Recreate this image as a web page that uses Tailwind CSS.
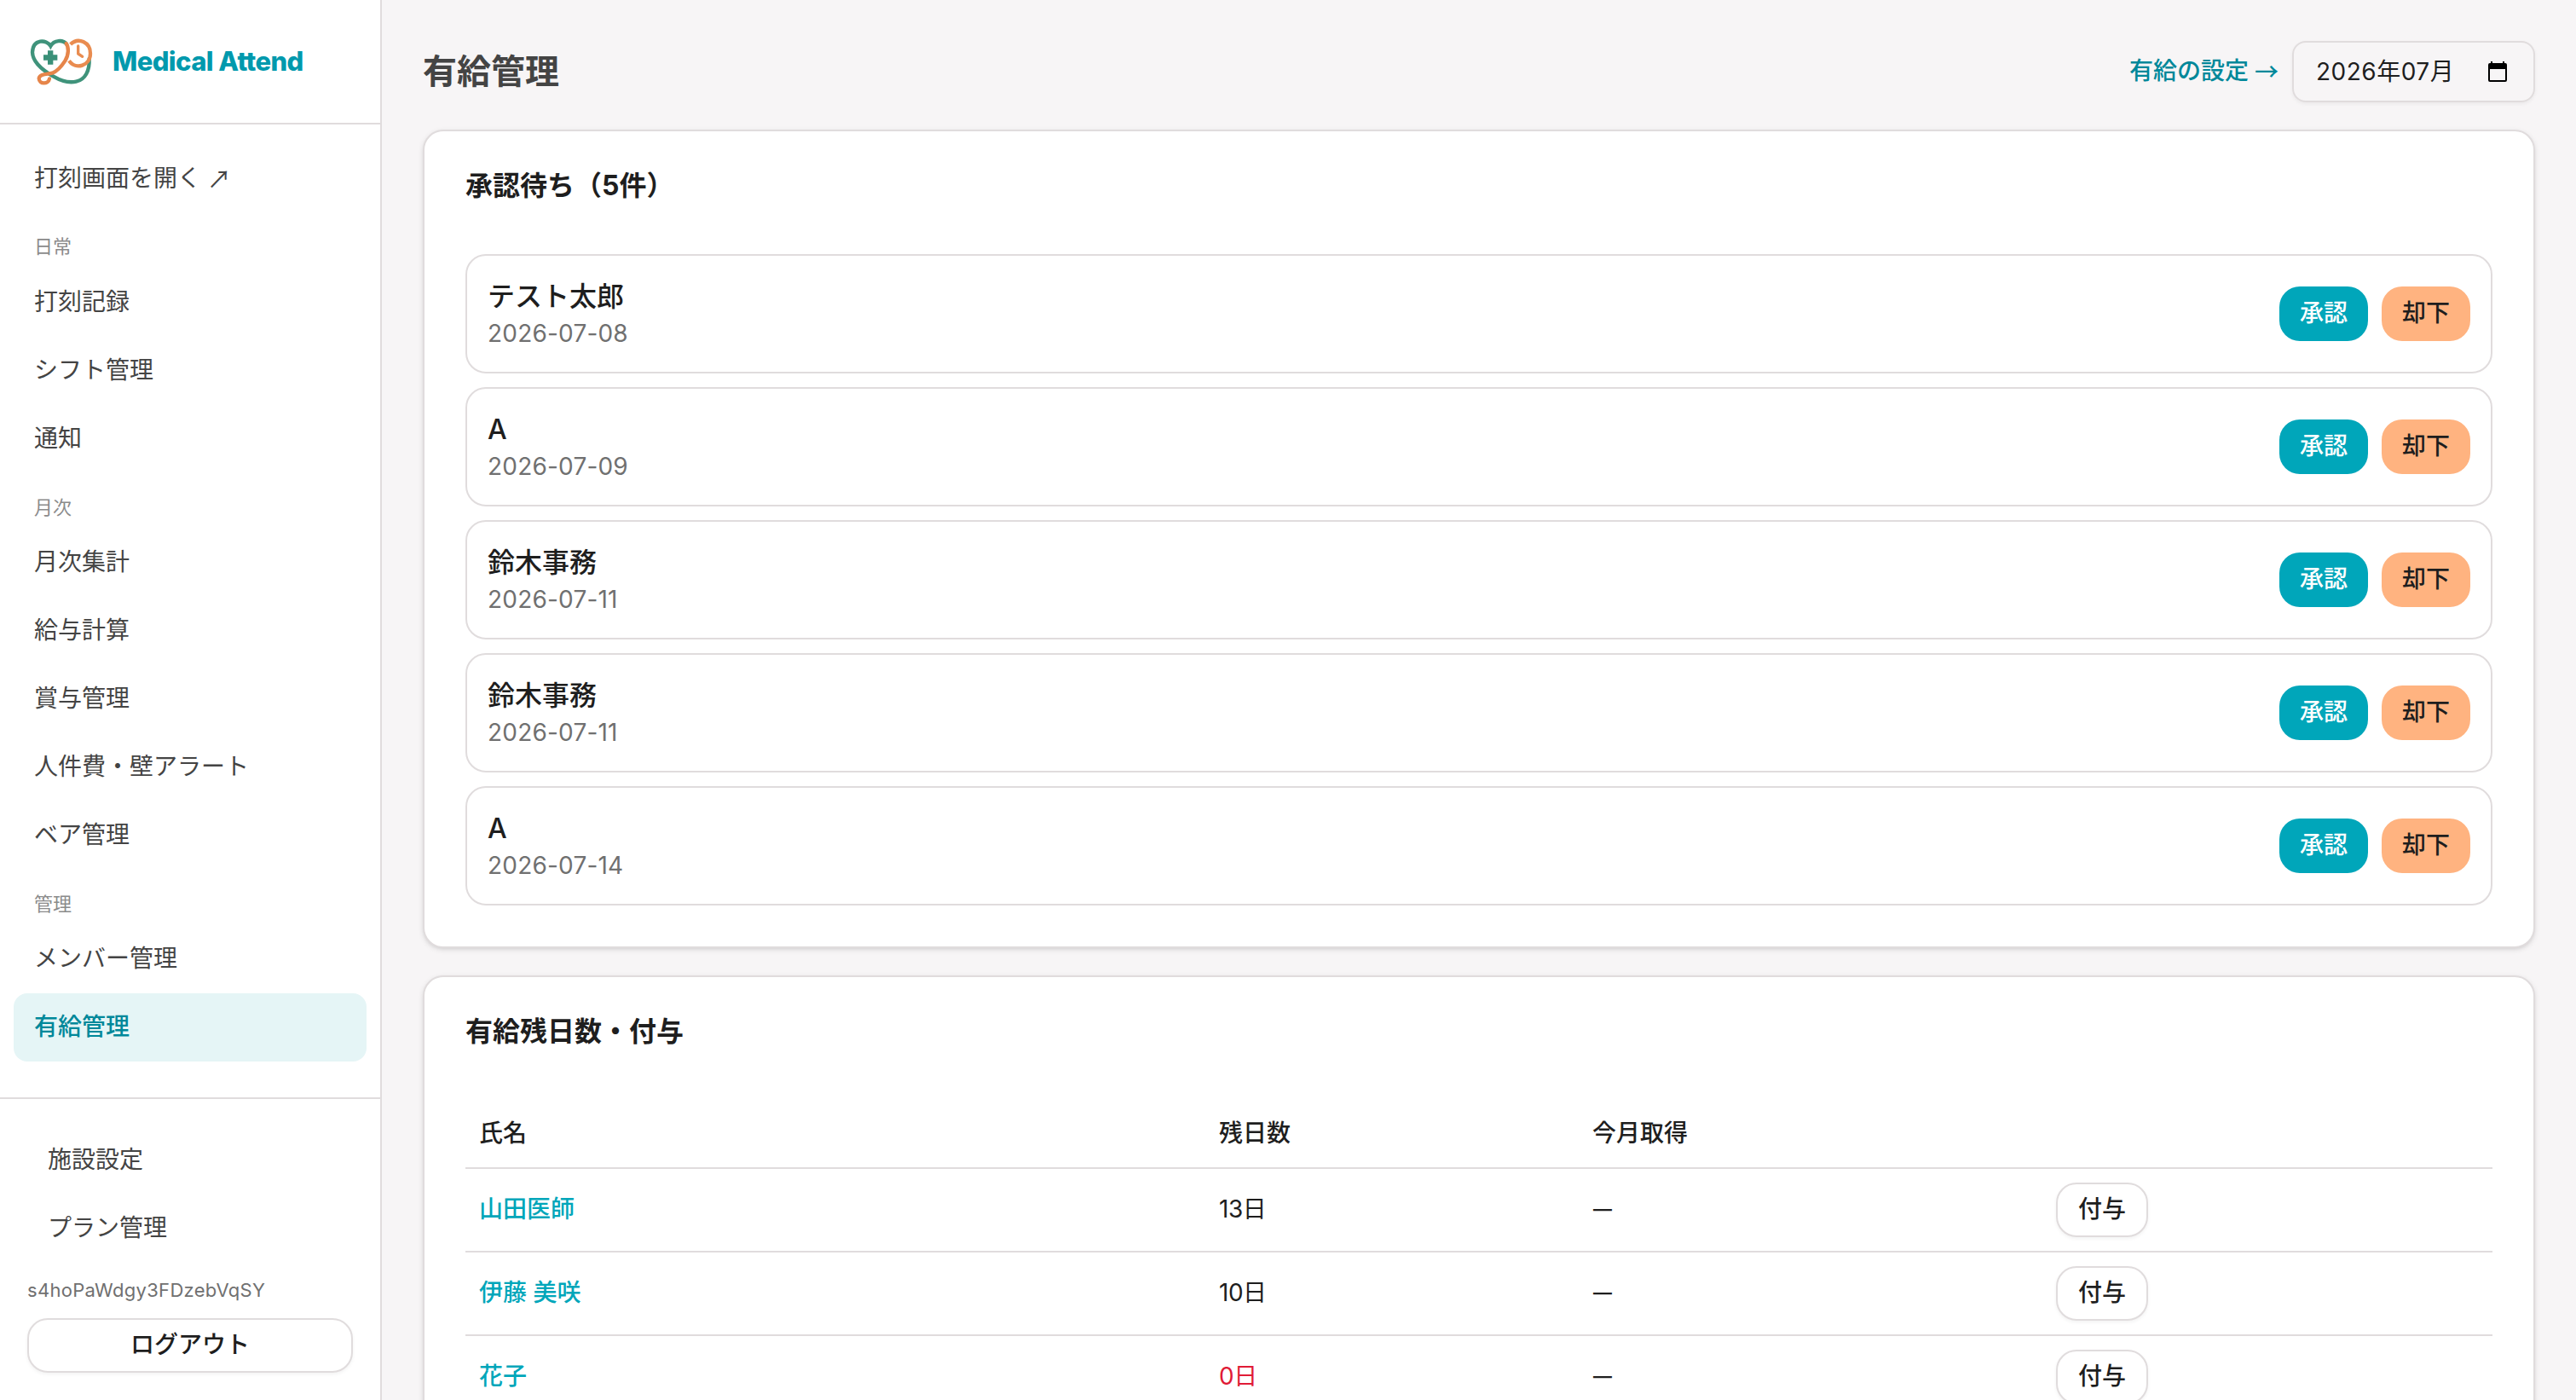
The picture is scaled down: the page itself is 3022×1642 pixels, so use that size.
<!DOCTYPE html>
<html lang="ja">
  <head>
    <meta charset="UTF-8" />
    <meta name="viewport" content="width=device-width, initial-scale=1.0" />
    <script src="https://cdn.jsdelivr.net/npm/@tailwindcss/browser@4"></script>
    <title>有給管理 | Medical Attend</title>
  </head>
  <body class="flex h-screen overflow-hidden bg-[#f7f5f6] font-['Inter','Noto_Sans_CJK_JP',sans-serif] text-[28px] leading-10 text-[#1e1e1e]">
    <aside class="flex h-screen w-[448px] shrink-0 flex-col border-r-2 border-[#e0dcdd] bg-white">
      <div class="flex h-[146px] shrink-0 items-center border-b-2 border-[#e0dcdd] pl-[35px]">
        <svg class="h-[57px] w-[74px]" viewBox="105 130 222 171" fill="none" stroke-width="13" stroke-linecap="round">
          <path stroke="#3f937b" d="M234 153C222 137 190 138 178 160C164 136 116 134 114 182C115 215 150 245 188 267C215 283 245 290 268 285C300 278 316 247 314 205" />
          <path stroke="#e6854a" d="M233 151C242 163 243 190 229 212C216 232 200 249 184 255C168 260 140 256 137 274C138 295 170 296 174 275" />
          <path stroke="#e98c50" stroke-linecap="butt" d="M248 154C276 127 318 147 318 186C318 229 267 246 243 212" />
          <path stroke="#e98c50" stroke-width="10" stroke-linejoin="round" d="M275 160V187L290 197" />
          <path stroke="#3a9078" stroke-width="19" stroke-linecap="butt" d="M153 200.500H202M177.500 176V225" />
        </svg>
        <span class="ml-[23px] text-[31px] font-extrabold tracking-[-0.6px] text-[#0099ad]">Medical Attend</span>
      </div>
      <nav class="flex flex-1 flex-col px-4 pt-[22px] text-[#444]">
        <a class="flex h-20 items-center px-6 pt-px">打刻画面を開く<span class="ml-[7px] font-['Noto_Sans_CJK_JP']">↗</span></a>
        <p class="h-[65.600px] px-6 pt-6 text-[22px] leading-[34px] text-[#8b8b8b]">日常</p>
        <a class="flex h-20 items-center px-6">打刻記録</a>
        <a class="flex h-20 items-center px-6">シフト管理</a>
        <a class="flex h-20 items-center px-6">通知</a>
        <p class="h-[65.600px] px-6 pt-6 text-[22px] leading-[34px] text-[#8b8b8b]">月次</p>
        <a class="flex h-20 items-center px-6">月次集計</a>
        <a class="flex h-20 items-center px-6">給与計算</a>
        <a class="flex h-20 items-center px-6">賞与管理</a>
        <a class="flex h-20 items-center px-6">人件費・壁アラート</a>
        <a class="flex h-20 items-center px-6">ベア管理</a>
        <p class="h-[65.600px] px-6 pt-6 text-[22px] leading-[34px] text-[#8b8b8b]">管理</p>
        <a class="flex h-20 items-center px-6 pb-px">メンバー管理</a>
        <a class="flex h-20 items-center rounded-2xl bg-[#e5f5f6] px-6 pb-px font-medium text-[#00889a]">有給管理</a>
      </nav>
      <div class="flex h-[355px] shrink-0 flex-col border-t-2 border-[#e0dcdd] px-8 pt-[31px] text-[#444]">
        <a class="flex h-20 items-center px-6">施設設定</a>
        <a class="flex h-20 items-center px-6">プラン管理</a>
        <p class="mt-4 text-[22px] leading-[34px] tracking-[0.3px] text-[#707070]">s4hoPaWdgy3FDzebVqSY</p>
        <button class="mt-4 h-16 w-[382px] shrink-0 rounded-3xl border-2 border-[#e0dcdd] bg-white pb-0.5 font-medium text-[#1e1e1e] shadow-[0_2px_4px_rgba(0,0,0,0.05)]">ログアウト</button>
      </div>
    </aside>

    <main class="flex-1 px-12 pt-12">
      <div class="flex h-[72px] items-center justify-between">
        <h1 class="text-[40px] font-bold text-[#444]">有給管理</h1>
        <div class="flex items-center gap-4">
          <a class="flex pb-0.5 font-medium text-[#00889a]">有給の設定<span class="ml-[7px] font-['Noto_Sans_CJK_JP']">→</span></a>
          <div class="flex h-[72px] w-[285px] items-center justify-between rounded-2xl border-2 border-[#e0dcdd] pr-[31px] pl-[26px] shadow-[0_2px_4px_rgba(0,0,0,0.05)]">
            <span class="pb-px tracking-[0.5px]">2026年07月</span>
            <svg class="h-6 w-[22px]" viewBox="0 0 22 24">
              <path fill="#000" fill-rule="evenodd" d="M3 0H5V2H17V0H19V2H20Q22 2 22 4V22Q22 24 20 24H2Q0 24 0 22V4Q0 2 2 2H3ZM2 9V22H20V9Z" />
            </svg>
          </div>
        </div>
      </div>

      <section class="mt-8 h-[960px] rounded-3xl border-2 border-[#e0dcdd] bg-white px-12 pt-12 shadow-[0_2px_6px_rgba(0,0,0,0.1),0_2px_4px_-2px_rgba(0,0,0,0.1)]">
        <h2 class="h-24 text-[32px] leading-8 font-bold">承認待ち（5件）</h2>
        <ul class="requestList flex flex-col gap-4"></ul>
      </section>

      <section class="mt-8 h-[960px] rounded-3xl border-2 border-[#e0dcdd] bg-white px-12 pt-12 shadow-[0_2px_6px_rgba(0,0,0,0.1),0_2px_4px_-2px_rgba(0,0,0,0.1)]">
        <h2 class="h-24 text-[32px] leading-8 font-bold">有給残日数・付与</h2>
        <div class="grid h-[81px] grid-cols-[868px_438px_544px_1fr] items-center border-b-2 border-[#e0dcdd] pb-0.5 font-medium">
          <span class="px-4">氏名</span>
          <span class="px-4">残日数</span>
          <span class="px-4">今月取得</span>
        </div>
        <div class="balanceRows"></div>
      </section>
    </main>

    <script>
const requestList = document.querySelector(".requestList");
const balanceRows = document.querySelector(".balanceRows");

const requests = [
  { name: "テスト太郎", date: "2026-07-08" },
  { name: "A", date: "2026-07-09" },
  { name: "鈴木事務", date: "2026-07-11" },
  { name: "鈴木事務", date: "2026-07-11" },
  { name: "A", date: "2026-07-14" },
];
const balances = [
  { name: "山田医師", days: 13 },
  { name: "伊藤 美咲", days: 10 },
  { name: "花子", days: 0 },
];

requests.forEach((elem) => {
  requestList.innerHTML += `<li class="flex h-[140px] items-center justify-between rounded-3xl border-2 border-[#e0dcdd] px-6">
      <div>
        <p class="text-[32px] leading-[48px] font-medium">${elem.name}</p>
        <p class="-mt-px mb-px tracking-[0.2px] text-[#707070]">${elem.date}</p>
      </div>
      <div class="flex gap-4">
        <button class="h-16 w-[104px] rounded-3xl bg-[#00a6ba] pb-0.5 font-medium text-white">承認</button>
        <button class="h-16 w-[104px] rounded-3xl bg-[#ffb380] pb-0.5 font-medium">却下</button>
      </div>
    </li>`;
});

balances.forEach((elem) => {
  const color = elem.days === 0 ? "text-[#e01b37]" : "";
  balanceRows.innerHTML += `<div class="grid h-[98px] grid-cols-[868px_438px_544px_1fr] items-center border-b-2 border-[#e0dcdd]">
      <a class="px-4 pb-0.5 font-medium text-[#00a6ba]">${elem.name}</a>
      <span class="px-4 pb-0.5 tracking-[-0.5px] ${color}">${elem.days}日</span>
      <span class="pb-0.5 pl-[17px] text-[22px] font-semibold">—</span>
      <div class="px-4">
        <button class="block h-16 w-[108px] rounded-3xl border-2 border-[#e0dcdd] bg-white pb-0.5 font-medium shadow-[0_2px_4px_rgba(0,0,0,0.05)]">付与</button>
      </div>
    </div>`;
});
    </script>
  </body>
</html>
